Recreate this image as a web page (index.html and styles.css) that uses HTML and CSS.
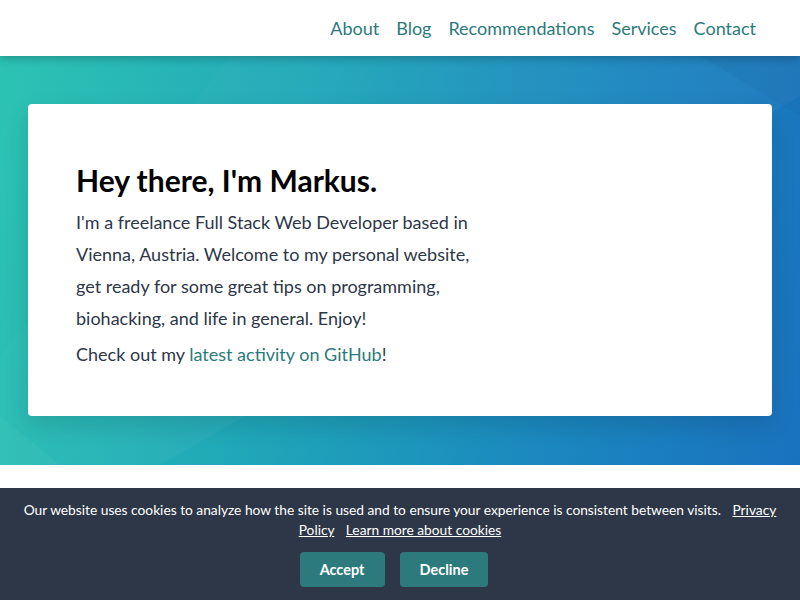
FILE: index.html
```html
<!DOCTYPE html>
<html lang="en">
<head>
<meta charset="utf-8">
<title>Markus</title>
<link rel="stylesheet" href="styles.css">
</head>
<body>
<header class="site-header">
  <nav class="nav">
    <a href="#">About</a>
    <a href="#">Blog</a>
    <a href="#">Recommendations</a>
    <a href="#">Services</a>
    <a href="#">Contact</a>
  </nav>
</header>
<main>
  <section class="hero">
    <svg class="hero-deco" viewBox="0 0 800 409" preserveAspectRatio="none" aria-hidden="true">
      <polygon points="230,0 800,0 800,40 160,409 0,409 0,300" fill="rgba(255,255,255,0.035)"/>
      <polygon points="0,0 230,0 0,300" fill="rgba(255,255,255,0.02)"/>
      <polygon points="700,0 800,0 800,60" fill="rgba(0,0,0,0.03)"/>
      <polygon points="0,409 0,360 60,409" fill="rgba(255,255,255,0.03)"/>
    </svg>
    <div class="card">
      <h1 class="title">Hey there, I'm Markus.</h1>
      <p class="intro">I'm a freelance Full Stack Web Developer based in Vienna, Austria. Welcome to my personal website, get ready for some great tips on programming, biohacking, and life in general. Enjoy!</p>
      <p class="intro more">Check out my <a href="#" class="link">latest activity on GitHub</a>!</p>
    </div>
  </section>
</main>
<div class="cookie">
  <p class="cookie-text">Our website uses cookies to analyze how the site is used and to ensure your experience is consistent between visits. <a href="#">Privacy Policy</a> <a href="#">Learn more about cookies</a></p>
  <div class="cookie-actions">
    <button class="btn">Accept</button>
    <button class="btn">Decline</button>
  </div>
</div>
</body>
</html>
```
FILE: styles.css
```css
* { box-sizing: border-box; }
html, body { margin: 0; padding: 0; }
body {
  font-family: Lato, "Open Sans", "Liberation Sans", sans-serif;
  color: #2d3748;
  background: #fff;
}
.site-header {
  position: relative;
  z-index: 2;
  height: 56px;
  background: #fff;
  display: flex;
  justify-content: flex-end;
  align-items: center;
  padding-right: 44px;
  box-shadow: 0 3px 8px rgba(0,0,0,0.22);
}
.nav {
  display: flex;
  gap: 17px;
}
.nav a {
  color: #2c7a7b;
  text-decoration: none;
  font-size: 18px;
  line-height: 24px;
}
.hero {
  position: relative;
  height: 409px;
  padding: 48px 28px;
  background: linear-gradient(100deg, #28c2b2 0%, #20a8b8 35%, #1b88bf 70%, #1a72be 100%);
  overflow: hidden;
}
.hero-deco {
  position: absolute;
  left: 0; top: 0;
  width: 100%; height: 100%;
}
.card {
  position: relative;
  background: #fff;
  border-radius: 4px;
  padding: 48px 48px 46px;
  box-shadow: 0 10px 25px rgba(0,0,0,0.12);
}
.title {
  margin: 8px 0 6px;
  font-size: 30px;
  line-height: 40px;
  font-weight: 700;
  color: #000;
}
.intro {
  margin: 0;
  max-width: 400px;
  font-size: 18px;
  line-height: 32px;
  color: #2d3748;
}
.intro.more { margin-top: 4px; }
.link { color: #2c7a7b; text-decoration: none; }
.cookie {
  position: fixed;
  left: 0; right: 0; bottom: 0;
  height: 112px;
  background: #2d3748;
  color: #fff;
  text-align: center;
  padding: 12px 16px 13px;
}
.cookie-text {
  margin: 0;
  font-size: 13.75px;
  line-height: 20px;
}
.cookie-text a {
  color: #fff;
  text-decoration: underline;
  margin-left: 8px;
}
.cookie-actions {
  display: flex;
  justify-content: center;
  gap: 15px;
  margin-top: 12px;
  padding-right: 12px;
}
.btn {
  font-family: inherit;
  font-size: 14.5px;
  font-weight: 700;
  color: #fff;
  background: #2c7a7b;
  border: 0;
  border-radius: 4px;
  height: 35px;
  padding: 0 20px;
}
```
